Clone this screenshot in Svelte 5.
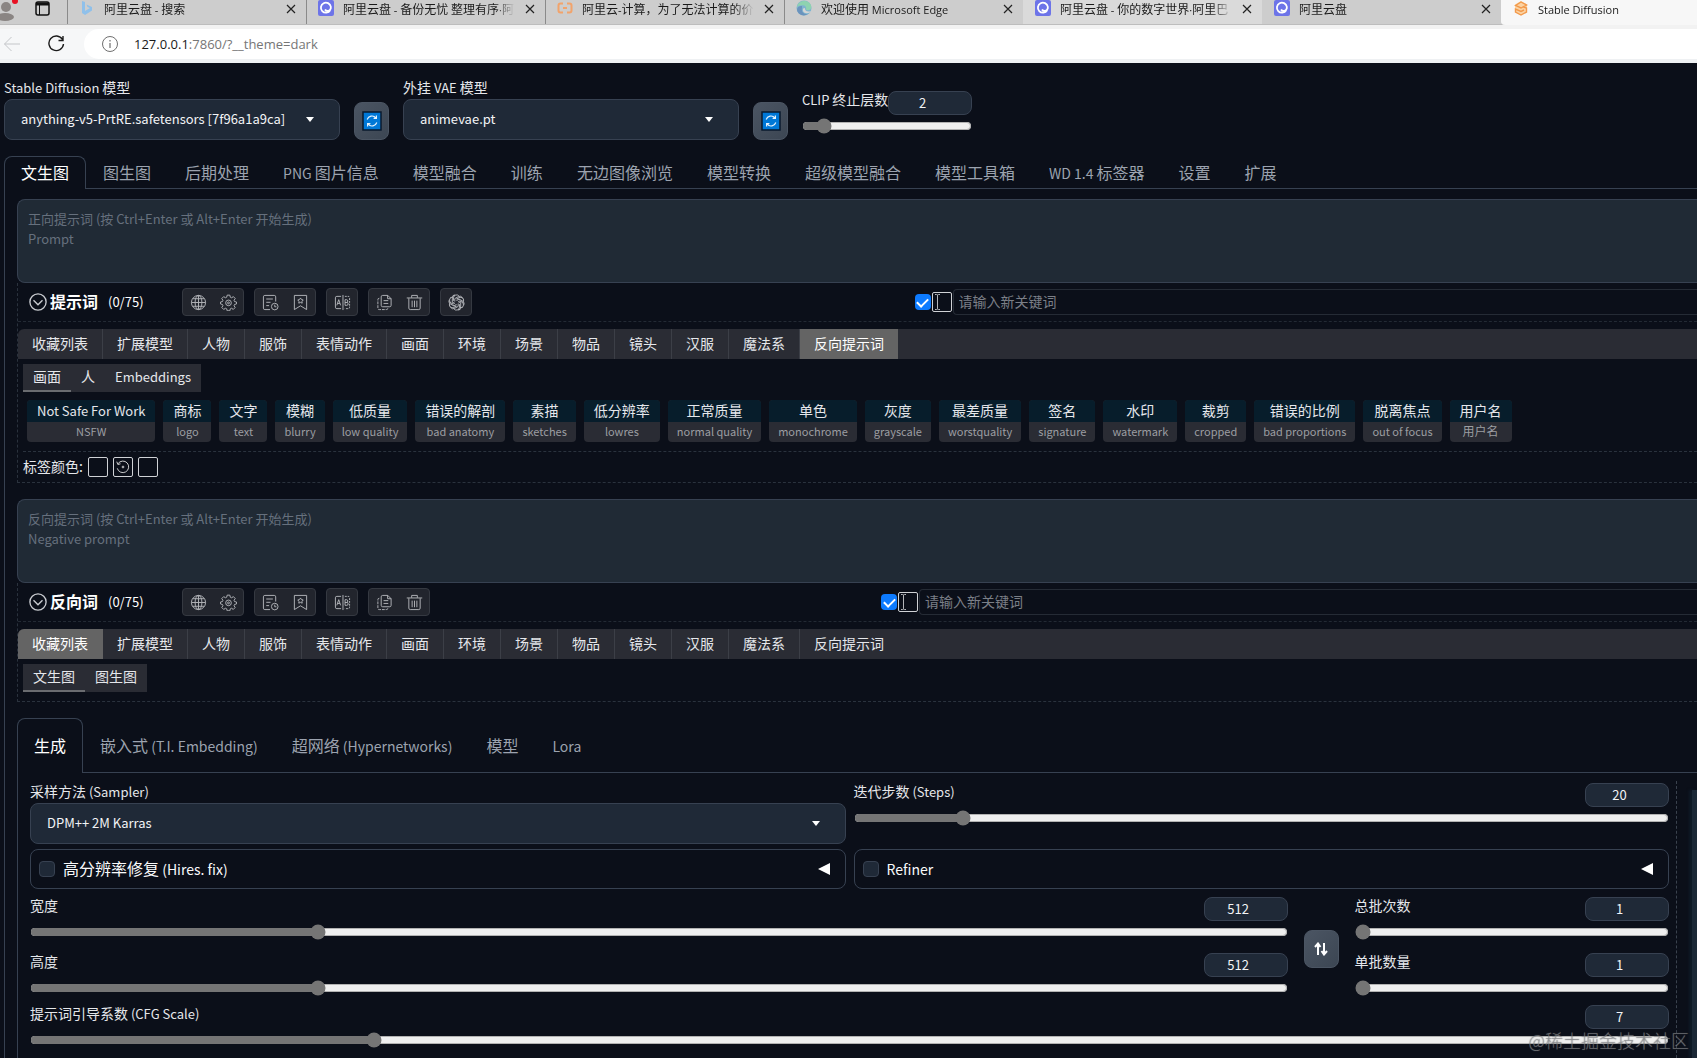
<script>
  const browserTabs = [
    { title: '阿里云盘 - 搜索', icon: 'bing', close: true },
    { title: '阿里云盘 - 备份无忧 整理有序·阿', icon: 'drive', close: true },
    { title: '阿里云-计算，为了无法计算的价', icon: 'cloud', close: true },
    { title: '欢迎使用 Microsoft Edge', icon: 'edge', close: true },
    { title: '阿里云盘 - 你的数字世界·阿里巴', icon: 'drive', close: true, kind: 'light' },
    { title: '阿里云盘', icon: 'drive', close: true },
    { title: 'Stable Diffusion', icon: 'sd', kind: 'active' }
  ];

  const mainTabs = ['文生图', '图生图', '后期处理', 'PNG 图片信息', '模型融合', '训练', '无边图像浏览', '模型转换', '超级模型融合', '模型工具箱', 'WD 1.4 标签器', '设置', '扩展'];
  const genTabs = ['生成', '嵌入式 (T.I. Embedding)', '超网络 (Hypernetworks)', '模型', 'Lora'];
  const groups = ['收藏列表', '扩展模型', '人物', '服饰', '表情动作', '画面', '环境', '场景', '物品', '镜头', '汉服', '魔法系', '反向提示词'];
  const chips = [
    ['Not Safe For Work', 'NSFW'], ['商标', 'logo'], ['文字', 'text'], ['模糊', 'blurry'],
    ['低质量', 'low quality'], ['错误的解剖', 'bad anatomy'], ['素描', 'sketches'], ['低分辨率', 'lowres'],
    ['正常质量', 'normal quality'], ['单色', 'monochrome'], ['灰度', 'grayscale'], ['最差质量', 'worstquality'],
    ['签名', 'signature'], ['水印', 'watermark'], ['裁剪', 'cropped'], ['错误的比例', 'bad proportions'],
    ['脱离焦点', 'out of focus'], ['用户名', '用户名']
  ];
  const baseTools = [['globe', 'gear'], ['history', 'bookmark'], ['translate'], ['copy', 'trash']];
  const toolNames = {
    globe: '语言', gear: '设置', history: '历史记录', bookmark: '收藏', translate: '翻译',
    copy: '复制', trash: '清空', ai: 'AI 生成'
  };

  let mainTab = $state('文生图');
  let genTab = $state('生成');
  let prompts = $state([
    {
      id: 'pos', title: '提示词', hint: '正向提示词 (按 Ctrl+Enter 或 Alt+Enter 开始生成)\nPrompt',
      tools: [...baseTools, ['ai']], group: '反向提示词', subs: ['画面', '人', 'Embeddings'], sub: '画面', chips, colors: true
    },
    {
      id: 'neg', title: '反向词', hint: '反向提示词 (按 Ctrl+Enter 或 Alt+Enter 开始生成)\nNegative prompt',
      tools: baseTools, group: '收藏列表', subs: ['文生图', '图生图'], sub: '文生图', chips: [], colors: false
    }
  ]);
  let v = $state({ clip: 2, steps: 20, width: 512, height: 512, count: 1, size: 1, cfg: 7 });

  function swap() {
    [v.width, v.height] = [v.height, v.width];
  }

  // Splits a label into runs, so that Latin runs can be set a step smaller than the Chinese ones.
  function runs(text) {
    return text.match(/[\x20-\x7e·]+|[^\x20-\x7e·]+/g) ?? [];
  }
</script>

{#snippet mixed(text)}{#each runs(text) as r}{#if /[\x21-\x7e·]/.test(r)}<span class="lat">{r}</span>{:else}{r}{/if}{/each}{/snippet}

{#snippet favicon(kind)}
  <svg class="fav" viewBox="0 0 16 16" aria-hidden="true">
    {#if kind === 'bing'}
      <path d="M3 1l3 1v9l5-3-2.500-1L7.500 4.500 13 7v3.500L6 15l-3-2z" fill="#8fc0ea" />
    {:else if kind === 'drive'}
      <rect width="16" height="16" rx="2" fill="#6d74e8" />
      <path d="M12.200 10.200a5 5 0 1 1 .6-3.500c.4 2.200-.9 4-2.800 4.200-1.600.1-2.600-.6-3-1.400" fill="none" stroke="#fff" stroke-width="1.800" />
    {:else if kind === 'cloud'}
      <path d="M6 3.500H3.500Q1.500 3.500 1.500 5.500v5q0 2 2 2H6M10 3.500h2.500q2 0 2 2v5q0 2-2 2H10M6 8h4" fill="none" stroke="#f2a36b" stroke-width="2" />
    {:else if kind === 'edge'}
      <circle cx="8" cy="8" r="7.500" fill="#7fb4cf" />
      <path d="M1 7C2 2 7 .2 11 1.500c3.500 1.200 5 4.500 4 7-1 2-4 2-5 1 .8-3-1.500-4.500-4-4.300C3.500 5.400 1.500 6 1 7z" fill="#8ed3b0" />
      <path d="M6 8c-1 4 2 7 6 6-4 3-10 1-11-4 0-3 3-4.500 5-4z" fill="#6b93bd" />
      <path d="M9 8.500c0 3 3 3.600 6 2.500-1.500 3-7 3-8 0-.5-1.500 0-3 1.500-3z" fill="#d5d5d5" />
    {:else}
      <path d="M8 1l6 3.400v7L8 15l-6-3.500v-7z" fill="#fbd3a4" />
      <path d="M2.500 5.500L8 2l5.500 3L8 8zM10.500 7l3 1v4L8 15l-5.500-3V9L8 11.500l3-1.500" fill="none" stroke="#f2994a" stroke-width="1.400" />
    {/if}
  </svg>
{/snippet}

{#snippet icon(name)}
  <svg class="ico" viewBox="0 0 18 18" aria-hidden="true">
    {#if name === 'globe'}
      <circle cx="9" cy="9" r="7.500" /><ellipse cx="9" cy="9" rx="3.600" ry="7.500" /><path d="M9 1.500v15M1.500 9h15M2.800 5h12.400M2.800 13h12.400" />
    {:else if name === 'gear'}
      <path d="M7.600 1.200h2.800l.5 2.200 1.300.6 2-1.200 1.900 2-1.200 1.900.5 1.300 2.100.5v2l-2.100.6-.5 1.300 1.100 1.900-1.900 2-1.900-1.200-1.300.6-.5 2.100H7.600l-.5-2.100-1.300-.6-1.900 1.200-2-2 1.200-1.900-.5-1.300-2.100-.6v-2l2.100-.5.5-1.300L1.900 4.800l2-2 1.900 1.200 1.300-.6z" /><circle cx="9" cy="9.400" r="3" /><circle cx="9" cy="9.400" r="1" />
    {:else if name === 'history'}
      <path d="M8.500 16.500H3q-1.500 0-1.500-1.500V3Q1.500 1.500 3 1.500h10q1.500 0 1.500 1.500v5M4.500 5.300h7M4.500 8.800h4.500M4.500 12.300h3" /><circle cx="13.500" cy="13.300" r="3.500" /><path d="M13.500 11.300v2.200h1.800" />
    {:else if name === 'bookmark'}
      <path d="M2.500 16.500v-15h13v15l-6.500-4z" /><path d="M9 4.200l1 1.700 1.900.4-1.300 1.400.2 2L9 8.900l-1.800.8.200-2-1.300-1.400L8 5.900z" />
    {:else if name === 'translate'}
      <path d="M9.500 1v16M7.500 2.500H3Q1.500 2.500 1.500 4v10q0 1.500 1.500 1.500h4.500M3 12l2-6 2 6M3.700 10h2.600M11.700 6v6h1.800q1.500 0 1.500-1.600T13.500 9h-1.800 1.500q1.400 0 1.400-1.500T13.200 6z" /><path stroke-dasharray="2 1" d="M11.500 2.500H15q1.500 0 1.500 1.500v10q0 1.500-1.500 1.500h-3.500" />
    {:else if name === 'copy'}
      <path d="M7 1.500h5.500L16 5v7q0 1.500-1.500 1.500H7Q5.500 13.500 5.500 12V3Q5.500 1.500 7 1.500zM12.300 1.500V5H16M8 7h5M8 10h5" /><path stroke-dasharray="3 1" d="M3.500 4.500Q2 4.500 2 6v9q0 1.500 1.500 1.500H11q1.500 0 1.500-1.300" />
    {:else if name === 'trash'}
      <path d="M.8 4.200h16.400M6 4V1.500h6V4M3 4.500V15q0 1.500 1.500 1.500h9Q15 16.500 15 15V4.500M6.500 7v7M9 7v7M11.500 7v7" />
    {:else if name === 'ai'}
      {#each [0, 60, 120, 180, 240, 300] as a}
        <path transform="rotate({a} 9 9)" d="M5.800 7.200V4.100A3.300 3.300 0 0 1 11.900 2.500M7.200 8V4.900L11 2.700q2.600-1.200 4.200 1.100" />
      {/each}
    {:else if name === 'reset'}
      <path d="M3.500 5.200A6.500 6.500 0 1 1 2.600 10.500M2 3l1.200 3.200 3-.8" /><circle cx="9" cy="9" r="1" />
    {/if}
  </svg>
{/snippet}

{#snippet caret()}
  <svg class="caret" viewBox="0 0 10 5" aria-hidden="true"><path d="M1 0h8L5 5z" fill="#fff" /></svg>
{/snippet}

{#snippet refresh(label)}
  <button class="square" aria-label={label}>
    <svg class="emoji" viewBox="0 0 20 20" aria-hidden="true">
      <rect x="1" y="1" width="18" height="18" fill="#0078d7" stroke="#0a1a2e" stroke-width="1.500" />
      <path d="M5.200 8.500A5 5 0 0 1 13.800 6.800M14.800 11.500A5 5 0 0 1 6.200 13.200M14.400 4.500v2.800h-2.800M5.600 15.500v-2.800h2.800" fill="none" stroke="#e6f2fc" stroke-width="1.200" />
    </svg>
  </button>
{/snippet}

{#snippet slider(id, label, min, max, step)}
  <div class="slider">
    <div class="slider-head">
      <label for={id}>{@render mixed(label)}</label>
      <input class="num" type="number" aria-label={label} {min} {max} {step} bind:value={v[id]} />
    </div>
    <input class="range" {id} type="range" {min} {max} {step} bind:value={v[id]} />
  </div>
{/snippet}

<div class="window">
  <header>
    <div class="strip">
      <div class="profile">
        <svg class="avatar" viewBox="0 0 20 22" aria-hidden="true">
          <circle cx="6" cy="7" r="5" fill="#8a8583" /><ellipse cx="5" cy="17" rx="9" ry="4" fill="#8a8583" /><circle cx="15" cy="1" r="3" fill="#e81123" />
        </svg>
        <svg class="pages" viewBox="0 0 16 16" aria-hidden="true">
          <rect x="1" y="1" width="13" height="13" rx="2" fill="none" stroke="#111" stroke-width="1.500" /><path d="M1 1.500h13v3H1z" fill="#111" /><path d="M4.500 4v10" stroke="#111" />
        </svg>
      </div>
      {#each browserTabs as t}
        <div class="btab {t.kind ?? ''}">
          {@render favicon(t.icon)}
          <span class="btitle">{@render mixed(t.title)}</span>
          {#if t.close}
            <button class="close" aria-label="关闭标签页"><svg viewBox="0 0 10 10"><path d="M1 1l8 8M9 1L1 9" stroke="#222" stroke-width="1.200" /></svg></button>
          {/if}
        </div>
      {/each}
    </div>
    <div class="toolbar">
      <button class="nav" aria-label="后退"><svg viewBox="0 0 18 18"><path d="M17 9H1.500M8.500 2L1.500 9l7 7" stroke="#c4c6c9" fill="none" /></svg></button>
      <button class="nav" aria-label="刷新"><svg viewBox="0 0 18 18"><path d="M15.500 4.500A7.300 7.300 0 1 0 16.500 9M16 1v4.500h-4.500" stroke="#1b1b1b" stroke-width="1.400" fill="none" /></svg></button>
      <div class="address">
        <svg viewBox="0 0 18 18" aria-hidden="true"><circle cx="9" cy="9" r="7.500" fill="none" stroke="#6f6f6f" /><path d="M9 8v5M9 5v1.500" stroke="#6f6f6f" stroke-width="1.200" /></svg>
        <span class="url"><b>127.0.0.1</b>:7860/?__theme=dark</span>
      </div>
    </div>
  </header>

  <main>
    <section class="quick">
      <div class="field model">
        <label for="ckpt">{@render mixed('Stable Diffusion 模型')}</label>
        <div class="pick"><select id="ckpt"><option>anything-v5-PrtRE.safetensors [7f96a1a9ca]</option></select>{@render caret()}</div>
      </div>
      {@render refresh('刷新模型')}
      <div class="field model">
        <label for="vae">{@render mixed('外挂 VAE 模型')}</label>
        <div class="pick"><select id="vae"><option>animevae.pt</option></select>{@render caret()}</div>
      </div>
      {@render refresh('刷新 VAE')}
      <div class="clip">{@render slider('clip', 'CLIP 终止层数', 1, 12, 1)}</div>
    </section>

    <nav class="tabs">
      {#each mainTabs as t}
        <button class="tab" class:on={t === mainTab} onclick={() => (mainTab = t)}>{@render mixed(t)}</button>
      {/each}
    </nav>

    <div class="panel">
      {#each prompts as p}
        <section class="prompt">
          <textarea placeholder={p.hint} aria-label={p.title}></textarea>
          <div class="helper">
            <div class="bar {p.id}">
              <div class="left">
                <button class="fold" aria-label="折叠">
                  <svg viewBox="0 0 20 20"><circle cx="10" cy="10" r="9" /><path d="M5 8l5 5 5-5" /></svg>
                </button>
                <strong>{p.title}</strong>
                <span class="count">(0/75)</span>
                {#each p.tools as set}
                  <div class="tools">
                    {#each set as name}
                      <button aria-label={toolNames[name]}>{@render icon(name)}</button>
                    {/each}
                  </div>
                {/each}
              </div>
              <div class="keyword">
                <input class="blue" type="checkbox" checked aria-label="启用" />
                <button class="swatch ibeam" aria-label="输入方式">
                  <svg viewBox="0 0 18 18"><path d="M2 1.500h1.500q1 0 1 1v13q0 1-1 1H2M7 1.500H5.500q-1 0-1 1v13q0 1 1 1H7" /></svg>
                </button>
                <input class="word" type="text" placeholder="请输入新关键词" aria-label="新关键词" />
              </div>
            </div>
            <div class="groups">
              {#each groups as g}
                <button class:on={g === p.group} onclick={() => (p.group = g)}>{g}</button>
              {/each}
            </div>
            <div class="body">
              <div class="subs">
                {#each p.subs as s}
                  <button class:on={s === p.sub} onclick={() => (p.sub = s)}>{@render mixed(s)}</button>
                {/each}
              </div>
              {#if p.chips.length}
                <div class="chips">
                  {#each p.chips as [name, tag]}
                    <button class="chip"><span class="name">{@render mixed(name)}</span><small>{@render mixed(tag)}</small></button>
                  {/each}
                </div>
              {/if}
              {#if p.colors}
                <div class="colors">
                  <span class="caption">标签颜色:</span>
                  <button class="swatch" aria-label="当前颜色"></button>
                  <button class="swatch" aria-label="重置颜色">{@render icon('reset')}</button>
                  <button class="swatch" aria-label="选择颜色"></button>
                </div>
              {/if}
            </div>
          </div>
        </section>
      {/each}

      <nav class="tabs tall">
        {#each genTabs as t}
          <button class="tab" class:on={t === genTab} onclick={() => (genTab = t)}>{@render mixed(t)}</button>
        {/each}
      </nav>
      <div class="gen">
        <div class="form">
          <div class="two">
            <div class="field">
              <label for="sampler">{@render mixed('采样方法 (Sampler)')}</label>
              <div class="pick"><select id="sampler"><option>DPM++ 2M Karras</option></select>{@render caret()}</div>
            </div>
            <div class="steps">{@render slider('steps', '迭代步数 (Steps)', 1, 150, 1)}</div>
          </div>
          <div class="two">
            {#each ['高分辨率修复 (Hires. fix)', 'Refiner'] as a}
              <div class="accordion">
                <label><input class="dark" type="checkbox" /><span>{@render mixed(a)}</span></label>
                <button aria-label="展开"><svg viewBox="0 0 12 12"><path d="M12 0v12L0 6z" fill="#fff" /></svg></button>
              </div>
            {/each}
          </div>
          <div class="size">
            <div class="stack wide">
              {@render slider('width', '宽度', 64, 2048, 8)}
              {@render slider('height', '高度', 64, 2048, 8)}
            </div>
            <button class="square" aria-label="交换宽高" onclick={swap}>
              <svg class="arrows" viewBox="0 0 14 14"><path d="M4 13V2M1 5l3-3.500L6.500 5M10 1v11M7.500 9l2.500 3.500L13 9" fill="none" stroke="#fff" stroke-width="2" /></svg>
            </button>
            <div class="stack">
              {@render slider('count', '总批次数', 1, 100, 1)}
              {@render slider('size', '单批数量', 1, 8, 1)}
            </div>
          </div>
          {@render slider('cfg', '提示词引导系数 (CFG Scale)', 1, 30, 1)}
        </div>
        <aside></aside>
      </div>
    </div>
  </main>
  <div class="mark">@稀土掘金技术社区</div>
</div>

<style>
  :global(body) { background: #0b0f19; }
  .window, .window * { box-sizing: border-box; }
  .window {
    position: relative; display: flex; flex-direction: column; height: 100vh; overflow: hidden;
    font: 14px/21px "Noto Sans CJK SC", sans-serif; color: #e5e7eb; background: #0b0f19;
  }
  button { font: inherit; color: inherit; background: none; border: 0; padding: 0; margin: 0; cursor: pointer; }
  input, select, textarea { font: inherit; font-size: 13px; color: inherit; margin: 0; }
  .lat { font-size: 13px; white-space: pre; }

  header { flex: none; color: #1a1a1a; background: #eff1f3; }
  .strip { display: flex; height: 25px; background: #cdcdcd; font-size: 12px; border-bottom: 1px solid #bdbdbd; }
  .strip .lat { font: 11px/16px "Open Sans", sans-serif; }
  .profile { width: 67px; flex: none; display: flex; gap: 15px; }
  .avatar { width: 20px; height: 22px; }
  .pages { width: 16px; height: 16px; margin: 1px 0 0; }
  .btab { flex: 0 1 239px; min-width: 0; display: flex; align-items: flex-start; gap: 9px; padding: 0 9px 0 11px; border-left: 1px solid #8a8a8a; }
  .fav { width: 16px; height: 16px; flex: none; }
  .btitle { flex: 1; height: 18px; line-height: 17px; overflow: hidden; white-space: nowrap; mask-image: linear-gradient(to left, transparent, #000 20px); }
  .btab.light { background: #dadada; border-color: #dadada; }
  .btab.light + .btab { border-color: #cdcdcd; }
  .btab.active { flex: 1; background: #f7f7f7; border-color: #f7f7f7; height: 25px; border-radius: 0 0 0 4px; }
  .close { width: 12px; height: 18px; display: grid; place-items: center; }
  .close svg { width: 10px; height: 10px; }
  .toolbar { display: flex; align-items: center; height: 38px; background: #f6f7f8; border-bottom: 4px solid #eff1f3; border-top: 4px solid #f2f2f2; padding-left: 3px; gap: 26px; }
  .nav { width: 18px; height: 18px; flex: none; }
  .nav svg { display: block; width: 18px; height: 18px; }
  .address { flex: 1; height: 30px; display: flex; align-items: center; gap: 15px; padding-left: 17px; margin-left: -7px; background: #fff; border-radius: 15px 0 0 15px; }
  .address svg { width: 18px; height: 18px; }
  .url { font: 13px/20px "Open Sans", sans-serif; color: #767676; }
  .url b { font-weight: 400; color: #1a1a1a; }

  main { flex: 1; display: flex; flex-direction: column; padding: 14px 0 0 4px; }
  .quick { display: flex; align-items: flex-end; gap: 14px; }
  .model { flex: 0 0 336px; }
  .clip { flex: 0 0 170px; padding-bottom: 6px; }
  label { display: block; white-space: nowrap; }
  .field label { padding-bottom: 1px; }
  .pick { display: grid; grid-template-columns: 1fr auto; align-items: center; }
  select { grid-area: 1 / 1 / 2 / 3; width: 100%; height: 41px; padding: 0 16px 2px; appearance: none; background: #1f2937; border: 1px solid #374151; border-radius: 8px; color: #f3f4f6; }
  .caret { grid-area: 1 / 2; width: 10px; height: 5px; margin-right: 25px; pointer-events: none; }
  .square { flex: none; width: 35px; height: 38px; display: grid; place-items: center; border-radius: 8px; border: 1px solid #4b5563; background: linear-gradient(135deg, #4b5563, #3c4653); }
  .emoji { width: 20px; height: 20px; }
  .arrows { width: 14px; height: 14px; }

  .slider-head { display: flex; justify-content: space-between; align-items: flex-start; height: 24px; }
  .slider-head label { line-height: 16px; }
  .num { width: 84px; height: 24px; flex: none; padding: 0 10px 1px; text-align: center; background: #1f2937; border: 1px solid #374151; border-radius: 8px; color: #f3f4f6; }
  .clip .slider-head label { width: 86px; }
  .range { display: block; width: 100%; height: 16px; margin: 3px 0 0; accent-color: #757575; }

  .tabs { display: flex; margin-top: 16px; height: 33px; flex: none; background: linear-gradient(#374151, #374151) bottom / 100% 1px no-repeat; }
  .tab { padding: 0 16px 1px; border: 1px solid transparent; border-bottom: 0; font-size: 16px; color: #9ca3af; white-space: nowrap; }
  .tab .lat { font-size: 14px; }
  .tab.on { color: #fff; border-color: #374151; border-radius: 8px 8px 0 0; background: #0b0f19; }
  .tall { height: 55px; }
  .panel { flex: 1; display: flex; flex-direction: column; padding: 10px 0 0 12px; border-left: 1px solid #374151; }
  .prompt + .prompt, .prompt + .tabs { margin-top: 16px; }
  textarea { display: block; width: 100%; height: 84px; padding: 9px 10px; resize: none; background: #202a35; border: 1px solid #374151; border-right: 0; border-radius: 8px 0 0 8px; line-height: 20px; }
  textarea::placeholder { color: #66707d; }
  .helper { border: 1px dashed #2a323d; border-top: 0; border-right: 0; }
  .bar { display: grid; align-items: center; height: 39px; border-bottom: 1px dashed #232a34; }
  .bar.pos { grid-template-columns: 53.4% 1fr; }
  .bar.neg { grid-template-columns: 51.4% 1fr; }
  .left { display: flex; align-items: center; padding-left: 11px; }
  .fold { width: 18px; height: 18px; }
  .fold svg { display: block; width: 18px; height: 18px; fill: none; stroke: #c9cbd0; stroke-width: 1.500; }
  strong { font-size: 16px; margin-left: 3px; padding-bottom: 1px; color: #fff; }
  .count { width: 74px; margin-left: 10px; padding-bottom: 1px; font-size: 13px; color: #fff; }
  .tools { display: flex; height: 28px; border: 1px solid #353941; border-radius: 4px; background: #22252d; margin-right: 10px; }
  .tools button { width: 30px; display: grid; place-items: center; }
  .ico { width: 17px; height: 17px; fill: none; stroke: #b4b6ba; stroke-width: 1; }
  .keyword { display: flex; align-items: center; gap: 1px; }
  .blue { appearance: none; width: 16px; height: 16px; border-radius: 4px; background: #0d7bff; display: grid; place-items: center; }
  .blue:checked::after { content: ""; width: 9px; height: 5px; border: solid #fff; border-width: 0 0 2px 2px; rotate: -45deg; translate: 0 -1px; }
  .swatch { width: 20px; height: 20px; border: 1px solid #d0d2d6; border-radius: 2px; display: grid; place-items: center; }
  .swatch .ico { width: 16px; height: 16px; stroke: #e0e0e0; }
  .ibeam svg { width: 18px; height: 18px; fill: none; stroke: #b4b6ba; }
  .word { flex: 1; min-width: 0; height: 26px; padding: 0 5px 3px; font-size: 14px; background: none; border: 1px solid #252b35; border-right: 0; border-radius: 4px 0 0 4px; }
  .word::placeholder { color: #7b7f87; }
  .groups { display: flex; height: 30px; margin-top: 7px; background: #2a2c34; border-radius: 6px 0 0 0; overflow: hidden; }
  .groups button { padding: 0 14px 2px; border-right: 1px solid #3c3f47; white-space: nowrap; }
  .groups button:last-child { border-right: 0; }
  .groups button.on { background: #646464; color: #fff; border-color: #646464; }
  .body { padding: 5px 0 0 5px; }
  .subs { display: flex; width: max-content; height: 28px; margin-bottom: 8px; background: #2a2c34; }
  .subs:last-child { margin-bottom: 9px; }
  .subs button { padding: 0 10px 1px; border-bottom: 2px solid transparent; }
  .subs button.on { border-color: #6a6c70; }
  .chips { display: flex; flex-wrap: wrap; gap: 8px; padding: 0 0 9px 4px; border-bottom: 1px dashed #2a323d; }
  .chip { display: flex; flex-direction: column; border-radius: 4px; overflow: hidden; background: #2a2c34; text-align: center; white-space: nowrap; }
  .name { width: 100%; padding: 0 10px; height: 22px; line-height: 20px; background: #071d2b; }
  .chip small { width: 100%; padding: 0 9px; height: 20px; font-size: 12px; line-height: 18px; color: #9c9ea2; }
  .chip small .lat { font-size: 11px; }
  .colors { display: flex; align-items: center; gap: 5px; height: 30px; }
  .caption { padding-bottom: 1px; }

  .gen { flex: 1; display: flex; padding: 8px 0 0 12px; border-left: 1px solid #374151; }
  .form { flex: 1; padding-right: 7px; border-right: 1px dashed #3a424e; }
  aside { width: 5px; margin: 9px 0 0 15px; background: #1b2836; box-shadow: -3px 0 3px #0f1a27; }
  .two { display: grid; grid-template-columns: 1fr 1fr; gap: 8px; margin-bottom: 5px; }
  .steps { padding-top: 2px; }
  .accordion { height: 40px; display: flex; align-items: center; justify-content: space-between; padding: 0 15px 0 8px; border: 1px solid #374151; border-radius: 8px; }
  .accordion label { display: flex; align-items: center; gap: 8px; font-size: 16px; color: #f9fafb; }
  .accordion .lat { font-size: 14px; }
  .accordion button, .accordion svg { display: block; width: 12px; height: 12px; }
  .dark { appearance: none; width: 16px; height: 16px; border: 1px solid #374151; border-radius: 4px; background: #1f2937; }
  .size { display: flex; align-items: center; gap: 16px; margin: 8px 0 9px; }
  .size .square { margin-top: 4px; }
  .stack { flex: 1; display: grid; gap: 13px; }
  .stack.wide { flex: 4; }
  .mark { position: absolute; right: 8px; bottom: 6px; font: 300 18px/24px "Noto Sans CJK SC", sans-serif; color: rgba(160, 163, 170, 0.45); text-shadow: 0 0 1px rgba(90, 90, 90, 0.8); pointer-events: none; }
</style>
